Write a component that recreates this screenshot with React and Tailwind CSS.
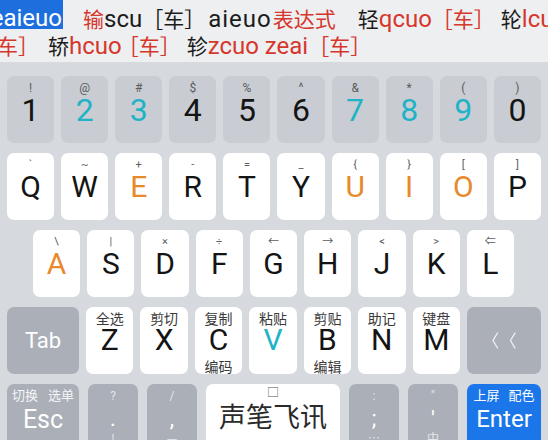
import React from 'react';

const TEAL = 'text-[#20b3c6]';
const ORANGE = 'text-[#e8892b]';
const DARK = 'text-[#141414]';

const numRow = [
  ['!', '1'], ['@', '2', TEAL], ['#', '3', TEAL], ['$', '4'], ['%', '5'],
  ['^', '6'], ['&', '7', TEAL], ['*', '8', TEAL], ['(', '9', TEAL], [')', '0'],
];

const qRow = [
  ['`', 'Q'], ['~', 'W'], ['+', 'E', ORANGE], ['-', 'R'], ['=', 'T'],
  ['_', 'Y'], ['{', 'U', ORANGE], ['}', 'I', ORANGE], ['[', 'O', ORANGE], [']', 'P'],
];

const aRow = [
  ['\\', 'A', ORANGE], ['|', 'S'], ['×', 'D'], ['÷', 'F'], ['←', 'G'],
  ['→', 'H'], ['<', 'J'], ['>', 'K'], ['⇐', 'L'],
];

const zRow = [
  ['全选', 'Z'], ['剪切', 'X'], ['复制', 'C', DARK, '编码'], ['粘贴', 'V', TEAL],
  ['剪贴', 'B', DARK, '编辑'], ['助记', 'N'], ['键盘', 'M'],
];

// candidate bar segments
const Lat = ({ children, red, className = '' }) => (
  <span className={`text-[24px] ${red ? 'text-[#d6372c]' : 'text-[#1c1c1c]'} ${className}`}>{children}</span>
);
const Han = ({ children, red, className = '' }) => (
  <span className={`font-['Noto_Sans_CJK_SC',sans-serif] text-[21px] ${red ? 'text-[#d6372c]' : 'text-[#1c1c1c]'} ${className}`}>{children}</span>
);

function CandidateBar() {
  return (
    <div className="h-[62px] bg-[#eeeff1] whitespace-nowrap overflow-hidden">
      <div className="flex h-[29px] items-start">
        <div className="flex h-[29px] w-[63px] shrink-0 justify-end overflow-hidden bg-[#1c6fdc] pr-[1px] pt-[7px] leading-[22px]">
          <span className="text-[24px] text-white">eaieuo</span>
        </div>
        <div className="flex pt-[7px] leading-[22px] items-baseline">
          <Han red className="ml-[20px]">输</Han>
          <Lat>scu</Lat>
          <Han>［车］</Han>
          <Lat className="ml-[3px] tracking-[1px]">aieuo</Lat>
          <Han red className="ml-[1px]">表达式</Han>
          <Han className="ml-[22px]">轻</Han>
          <Lat red>qcuo</Lat>
          <Han red>［车］</Han>
          <Han className="ml-[6px]">轮</Han>
          <Lat red>lcu</Lat>
        </div>
      </div>
      <div className="flex items-baseline pt-[4px] leading-[24px]">
        <Han red className="ml-[-3px]">车］</Han>
        <Han className="ml-[9px]">轿</Han>
        <Lat red>hcuo</Lat>
        <Han red className="ml-[-4px]">［车］</Han>
        <Han className="ml-[6px]">轸</Han>
        <Lat red>zcuo zeai</Lat>
        <Han red>［车］</Han>
      </div>
    </div>
  );
}

function NumKey({ hint, label, color = DARK }) {
  return (
    <div className="flex flex-1 flex-col items-center rounded-[7px] bg-[#c9ccd2] pt-[6px]">
      <span className="h-[12px] text-[12px] leading-[12px] text-[#5a5c60]">{hint}</span>
      <span className={`text-[32px] leading-[32px] ${color}`}>{label}</span>
    </div>
  );
}

function LetterKey({ hint, label, color = DARK }) {
  return (
    <div className="flex flex-1 flex-col items-center rounded-[7px] bg-white pt-[6px]">
      <span className="h-[12px] text-[11px] leading-[12px] text-[#5a5c60]">{hint}</span>
      <span className={`mt-[1px] text-[30px] leading-[30px] ${color}`}>{label}</span>
    </div>
  );
}

function CnKey({ top, label, color = DARK, sub }) {
  return (
    <div className="flex flex-1 flex-col items-center rounded-[7px] bg-white pt-[3px]">
      <span className="font-['Noto_Sans_CJK_SC',sans-serif] text-[14px] leading-[16px] text-[#3a3a3a]">{top}</span>
      <span className={`text-[30px] leading-[28px] ${color}`}>{label}</span>
      {sub && (
        <span className="mt-[5px] font-['Noto_Sans_CJK_SC',sans-serif] text-[14px] leading-[14px] text-[#3a3a3a]">{sub}</span>
      )}
    </div>
  );
}

function PunctKey({ top, mid, bottom }) {
  return (
    <div className="flex w-[50px] shrink-0 flex-col items-center rounded-[7px] bg-[#abafb7] pt-[6px]">
      <span className="text-[12px] leading-[12px] text-[#e4e6ea]">{top}</span>
      <span className="mt-[6px] text-[22px] leading-[22px] text-white">{mid}</span>
      <span className="mt-[1px] font-['Noto_Sans_CJK_SC',sans-serif] text-[12px] leading-[14px] text-[#e4e6ea]">{bottom}</span>
    </div>
  );
}

function Backspace() {
  return (
    <div className="flex w-[74px] shrink-0 items-center justify-center rounded-[7px] bg-[#abafb7]">
      <svg width="24" height="17" viewBox="0 0 24 17" fill="none" stroke="#f1f2f4" strokeWidth="1.3" strokeLinecap="round" strokeLinejoin="round">
        <path d="M5.5 1 L1 8.5 L5.5 16" />
        <path d="M23 1 L18.5 8.5 L23 16" />
      </svg>
    </div>
  );
}

export default function App() {
  return (
    <div className="h-[440px] w-[548px] overflow-hidden bg-[#d6d9de] font-['Roboto','Noto_Sans_CJK_SC',sans-serif]">
      <CandidateBar />
      <div className="flex flex-col gap-[10px] px-[7px] pt-[14px]">
        <div className="flex h-[67px] gap-[7px]">
          {numRow.map(([h, l, c]) => <NumKey key={l} hint={h} label={l} color={c} />)}
        </div>
        <div className="flex h-[67px] gap-[7px]">
          {qRow.map(([h, l, c]) => <LetterKey key={l} hint={h} label={l} color={c} />)}
        </div>
        <div className="flex h-[67px] gap-[7px] pl-[26px] pr-[27px]">
          {aRow.map(([h, l, c]) => <LetterKey key={l} hint={h} label={l} color={c} />)}
        </div>
        <div className="flex h-[67px] gap-[7px]">
          <div className="flex w-[72px] shrink-0 items-center justify-center rounded-[7px] bg-[#abafb7] text-[22px] text-white">
            Tab
          </div>
          {zRow.map(([t, l, c, s]) => <CnKey key={l} top={t} label={l} color={c} sub={s} />)}
          <Backspace />
        </div>
        <div className="flex h-[67px] gap-[9px]">
          <div className="flex w-[72px] shrink-0 flex-col items-center rounded-[7px] bg-[#abafb7] pt-[3px]">
            <span className="flex gap-[10px] font-['Noto_Sans_CJK_SC',sans-serif] text-[13px] leading-[16px] text-[#f4f5f7]">
              <span>切换</span><span>选单</span>
            </span>
            <span className="mt-[4px] text-[25px] leading-[25px] text-white">Esc</span>
          </div>
          <PunctKey top="?" mid="." bottom="!" />
          <PunctKey top="/" mid="," bottom="—" />
          <div className="flex flex-1 flex-col items-center rounded-[7px] bg-white pt-[3px]">
            <span className="text-[12px] leading-[13px] text-[#555]">□</span>
            <span className="mt-[2px] font-['Noto_Sans_CJK_SC',sans-serif] text-[27px] leading-[28px] text-[#2a2a2a]">声笔飞讯</span>
          </div>
          <PunctKey top=":" mid=";" bottom="…" />
          <PunctKey top={'"'} mid="'" bottom="中" />
          <div className="flex w-[74px] shrink-0 flex-col items-center rounded-[7px] bg-[#1a76e9] pt-[3px]">
            <span className="flex gap-[9px] font-['Noto_Sans_CJK_SC',sans-serif] text-[13px] leading-[16px] text-white">
              <span>上屏</span><span>配色</span>
            </span>
            <span className="mt-[4px] text-[24px] leading-[25px] text-white">Enter</span>
          </div>
        </div>
      </div>
    </div>
  );
}
